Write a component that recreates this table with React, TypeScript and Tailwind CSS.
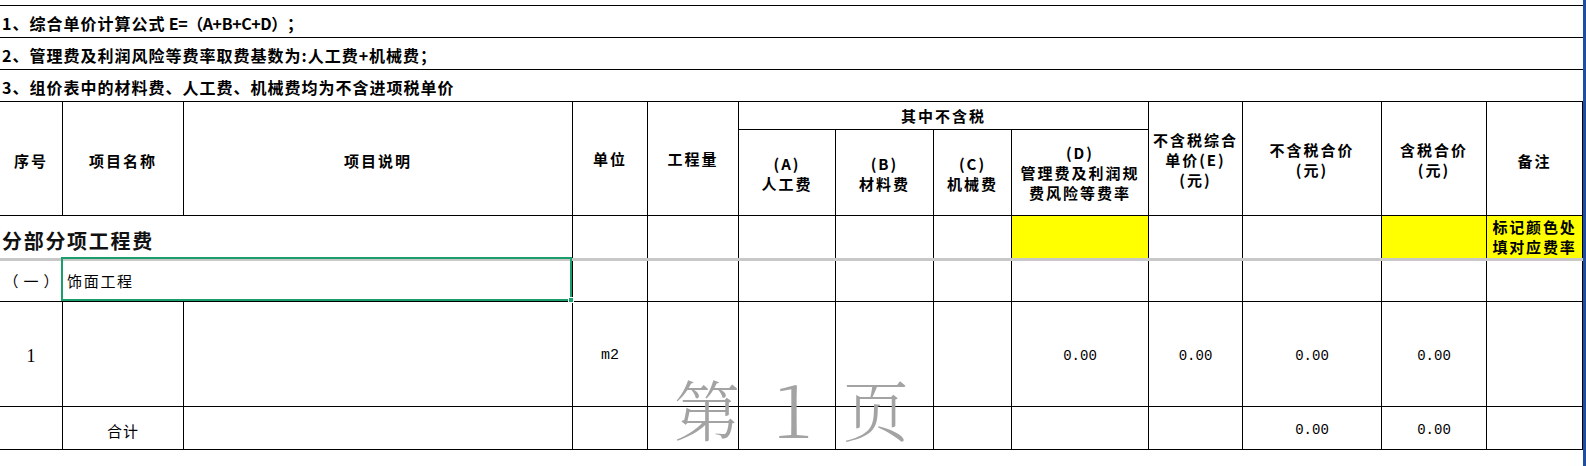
import React from "react";
import clsx from "clsx";

const cols =
  "grid grid-cols-[63px_121px_389px_75px_91px_97px_98px_78px_137px_94px_139px_105px_96px]";

function Cell({
  className,
  noBottom,
  children,
}: {
  className?: string;
  noBottom?: boolean;
  children?: React.ReactNode;
}) {
  return (
    <div
      className={clsx(
        "flex items-center justify-center border-r border-black text-center",
        !noBottom && "border-b",
        className
      )}
    >
      {children}
    </div>
  );
}

const num = "font-['Liberation_Mono',monospace] text-[14px] pt-[4px]";

export default function App() {
  const notes = [
    <>
      1、综合单价计算公式<span className="tracking-[-0.4px]"> E=（A+B+C+D）</span>；
    </>,
    <>2、管理费及利润风险等费率取费基数为:人工费+机械费；</>,
    <>3、组价表中的材料费、人工费、机械费均为不含进项税单价</>,
  ];

  return (
    <div className="flex h-[466px] w-[1586px] overflow-hidden bg-white font-['Noto_Sans_CJK_SC',sans-serif] text-black">
      <div className="relative w-[1583px] pt-[5px]">
        {/* notes */}
        <div className="border-t border-black">
          {notes.map((n, i) => (
            <div
              key={i}
              className="flex h-[32px] items-center whitespace-pre border-b border-black pl-[2px] pt-[2px] text-[16px] font-bold tracking-[1px]"
            >
              {n}
            </div>
          ))}
        </div>

        {/* header */}
        <div className={clsx(cols, "grid-rows-[28px_86px] text-[15px] font-bold leading-[20px] tracking-[2px]")}>
          <Cell className="row-span-2 pt-[4px]">序号</Cell>
          <Cell className="row-span-2 pt-[4px]">项目名称</Cell>
          <Cell className="row-span-2 pt-[4px]">项目说明</Cell>
          <Cell className="row-span-2">单位</Cell>
          <Cell className="row-span-2">工程量</Cell>
          <Cell className="col-span-4 pt-[1px]">其中不含税</Cell>
          <Cell className="row-span-2 pt-[2px]">
            不含税综合
            <br />
            单价(E)
            <br />
            (元)
          </Cell>
          <Cell className="row-span-2 pt-[2px]">
            不含税合价
            <br />
            (元)
          </Cell>
          <Cell className="row-span-2 pt-[2px]">
            含税合价
            <br />
            (元)
          </Cell>
          <Cell className="row-span-2 pt-[4px]">备注</Cell>
          <Cell className="pt-[2px]">
            (A)
            <br />
            人工费
          </Cell>
          <Cell className="pt-[2px]">
            (B)
            <br />
            材料费
          </Cell>
          <Cell className="pt-[2px]">
            (C)
            <br />
            机械费
          </Cell>
          <Cell className="pt-[1px]">
            (D)
            <br />
            管理费及利润规
            <br />
            费风险等费率
          </Cell>
        </div>

        {/* 分部分项工程费 */}
        <div className={clsx(cols, "h-[42px]")}>
          <div className="col-span-3 flex items-center border-r border-black pl-[2px] pt-[7px] text-[20px] font-bold tracking-[1.7px] text-[#111]">
            分部分项工程费
          </div>
          <Cell noBottom />
          <Cell noBottom />
          <Cell noBottom />
          <Cell noBottom />
          <Cell noBottom />
          <Cell noBottom className="bg-[#ffff00]" />
          <Cell noBottom />
          <Cell noBottom />
          <Cell noBottom className="bg-[#ffff00]" />
          <Cell noBottom className="bg-[#ffff00] text-[15px] font-bold leading-[20px] tracking-[1.8px]">
            标记颜色处
            <br />
            填对应费率
          </Cell>
        </div>
        <div className="h-[3px] bg-[#c8c8c8]" />

        {/* (一) 饰面工程 */}
        <div className={clsx(cols, "h-[41px] text-[15px]")}>
          <Cell className="pl-[5px] text-[15px] tracking-[5px]">（一）</Cell>
          <div className="relative col-span-2 flex items-center border-r border-b border-black pl-[4px] tracking-[1.7px]">
            饰面工程
            <div className="absolute -left-[2px] -top-[4px] right-0 bottom-0 border-2 border-[#1b9d6c]" />
            <div className="absolute -right-[2px] -bottom-[2px] h-[6px] w-[6px] border border-white bg-[#1b9d6c]" />
          </div>
          <Cell />
          <Cell />
          <Cell />
          <Cell />
          <Cell />
          <Cell />
          <Cell />
          <Cell />
          <Cell />
          <Cell />
        </div>

        {/* 1 */}
        <div className={clsx(cols, "h-[105px]")}>
          <Cell className="pt-[4px] font-['Liberation_Serif',serif] text-[18px]">1</Cell>
          <Cell />
          <Cell />
          <Cell className="pt-[4px] font-['Liberation_Mono',monospace] text-[15px]">m2</Cell>
          <Cell />
          <Cell />
          <Cell />
          <Cell />
          <Cell className={num}>0.00</Cell>
          <Cell className={num}>0.00</Cell>
          <Cell className={num}>0.00</Cell>
          <Cell className={num}>0.00</Cell>
          <Cell />
        </div>

        {/* 合计 */}
        <div className={clsx(cols, "h-[43px]")}>
          <Cell />
          <Cell className="pt-[6px] text-[15px] tracking-[1px]">合计</Cell>
          <Cell />
          <Cell />
          <Cell />
          <Cell />
          <Cell />
          <Cell />
          <Cell />
          <Cell />
          <Cell className={num}>0.00</Cell>
          <Cell className={num}>0.00</Cell>
          <Cell />
        </div>

        {/* page watermark */}
        <span className="absolute left-[674px] top-[375px] font-['Noto_Serif_CJK_SC','Noto_Sans_CJK_SC',serif] text-[66px] font-light leading-none text-[#a3a3a3]">
          第
        </span>
        <span className="absolute left-[773px] top-[369px] font-['Noto_Serif_CJK_SC','Liberation_Serif',serif] text-[74px] font-light leading-none text-[#a3a3a3]">
          1
        </span>
        <span className="absolute left-[843px] top-[375px] font-['Noto_Serif_CJK_SC','Noto_Sans_CJK_SC',serif] text-[66px] font-light leading-none text-[#a3a3a3]">
          页
        </span>
      </div>
      <div className="w-[3px] bg-[#1f4ea1]" />
    </div>
  );
}
